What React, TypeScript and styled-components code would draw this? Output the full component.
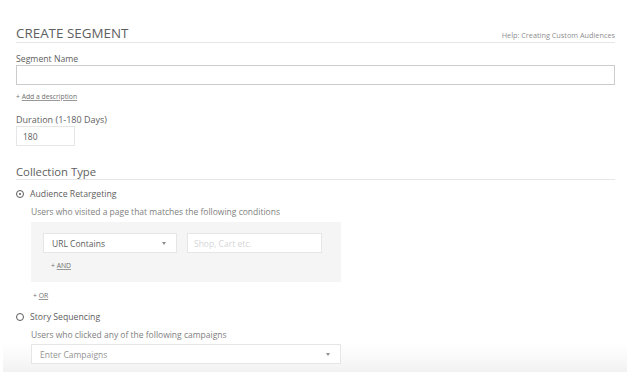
import React from 'react'
import styled, { createGlobalStyle } from 'styled-components'

const GlobalStyle = createGlobalStyle`
  html, body {
    margin: 0;
    padding: 0;
    background: #ffffff;
  }
  body {
    font-family: 'Open Sans', 'Liberation Sans', sans-serif;
    color: #5c5c5c;
  }
`

export default function App(): JSX.Element {
  return (
    <>
      <GlobalStyle />
      <Page>
        <Header>
          <Title>CREATE SEGMENT</Title>
          <HelpLink>Help: Creating Custom Audiences</HelpLink>
        </Header>

        <Label $top={10}>Segment Name</Label>
        <TextInput $top={0} />
        <SmallLink $top={7}>
          + <u>Add a description</u>
        </SmallLink>

        <Label $top={12} $size={9}>
          Duration (1-180 Days)
        </Label>
        <TextInput $top={0} $width={59} $light defaultValue="180" />

        <SectionTitle>Collection Type</SectionTitle>

        <RadioRow $top={8}>
          <Radio $checked />
          Audience Retargeting
        </RadioRow>
        <Hint $top={6}>Users who visited a page that matches the following conditions</Hint>

        <ConditionBox>
          <ConditionRow>
            <Select $width={134}>
              URL Contains
              <Caret />
            </Select>
            <TextInput $width={135} $light placeholder="Shop, Cart etc." />
          </ConditionRow>
          <SmallLink $top={8} $indent={8}>
            + <u>AND</u>
          </SmallLink>
        </ConditionBox>

        <SmallLink $top={9} $indent={17}>
          + <u>OR</u>
        </SmallLink>

        <RadioRow $top={10}>
          <Radio />
          Story Sequencing
        </RadioRow>
        <Hint $top={6}>Users who clicked any of the following campaigns</Hint>
        <Select $width={310} $muted $indent={15} $top={3}>
          Enter Campaigns
          <Caret />
        </Select>
      </Page>
    </>
  )
}

const Page = styled.div`
  margin-left: 3px;
  width: 624px;
  box-sizing: border-box;
  padding: 25px 11px 8px 13px;
  display: flex;
  flex-direction: column;
  align-items: flex-start;
  background: linear-gradient(to bottom, #ffffff 0, #ffffff calc(100% - 28px), #f2f2f2 100%);
`

const Header = styled.div`
  align-self: stretch;
  display: flex;
  justify-content: space-between;
  align-items: baseline;
  border-bottom: 1px solid #e6e6e6;
  margin-right: 1px;
`

const Title = styled.h1`
  margin: 0;
  font-size: 13.4px;
  line-height: 17px;
  font-weight: 400;
  color: #606060;
`

const HelpLink = styled.span`
  font-size: 7.3px;
  color: #8f8f8f;
`

const Label = styled.label<{ $top: number; $size?: number }>`
  display: block;
  margin-top: ${(p) => p.$top}px;
  font-size: ${(p) => p.$size ?? 8.7}px;
  line-height: 12px;
  color: #606060;
`

const TextInput = styled.input<{ $top?: number; $width?: number; $light?: boolean }>`
  box-sizing: border-box;
  margin: ${(p) => p.$top ?? 0}px 0 0 0;
  height: 20px;
  width: ${(p) => (p.$width ? `${p.$width}px` : '599px')};
  border: 1px solid ${(p) => (p.$light ? '#e6e6e6' : '#cccccc')};
  border-radius: 0;
  background: #fff;
  padding: 0 6px;
  font-family: inherit;
  font-size: 8.5px;
  color: #5c5c5c;
  outline: none;

  &::placeholder {
    color: #d6d6d6;
  }
`

const SmallLink = styled.div<{ $top: number; $indent?: number }>`
  margin-top: ${(p) => p.$top}px;
  padding-left: ${(p) => p.$indent ?? 0}px;
  font-size: 6.8px;
  line-height: 10px;
  color: #707070;

  u {
    text-decoration-color: #999;
  }
`

const SectionTitle = styled.h2`
  align-self: stretch;
  margin: 18px 1px 0 0;
  font-size: 11.3px;
  line-height: 15px;
  font-weight: 400;
  color: #606060;
  border-bottom: 1px solid #e6e6e6;
`

const RadioRow = styled.div<{ $top: number }>`
  display: flex;
  align-items: center;
  gap: 6px;
  margin-top: ${(p) => p.$top}px;
  font-size: 8.7px;
  line-height: 12px;
  color: #606060;
`

const Radio = styled.span<{ $checked?: boolean }>`
  box-sizing: border-box;
  width: 8px;
  height: 8px;
  border-radius: 50%;
  border: 1.6px solid #5a5a5a;
  display: flex;
  align-items: center;
  justify-content: center;

  &::after {
    content: '';
    display: ${(p) => (p.$checked ? 'block' : 'none')};
    width: 2.4px;
    height: 2.4px;
    border-radius: 50%;
    background: #5a5a5a;
  }
`

const Hint = styled.div<{ $top: number }>`
  margin-top: ${(p) => p.$top}px;
  padding-left: 15px;
  font-size: 8.5px;
  line-height: 12px;
  color: #808080;
`

const ConditionBox = styled.div`
  margin: 4px 0 0 15px;
  width: 310px;
  box-sizing: border-box;
  padding: 11px 12px 11px;
  background: #f5f5f5;
`

const ConditionRow = styled.div`
  display: flex;
  gap: 10px;
`

const Select = styled.div<{ $width: number; $muted?: boolean; $indent?: number; $top?: number }>`
  box-sizing: border-box;
  display: flex;
  align-items: center;
  justify-content: space-between;
  width: ${(p) => p.$width}px;
  height: 20px;
  margin: ${(p) => p.$top ?? 0}px 0 0 ${(p) => p.$indent ?? 0}px;
  padding: 0 10px 0 8px;
  background: #fff;
  border: 1px solid #e6e6e6;
  font-size: 8.5px;
  color: ${(p) => (p.$muted ? '#959595' : '#5c5c5c')};
`

const Caret = styled.span`
  width: 0;
  height: 0;
  border-left: 2.5px solid transparent;
  border-right: 2.5px solid transparent;
  border-top: 3px solid #8f8f8f;
`
